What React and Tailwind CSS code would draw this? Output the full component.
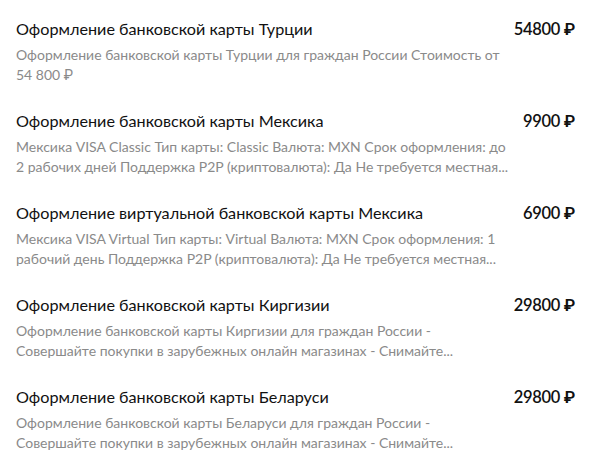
import React from 'react';

const items = [
  {
    title: 'Оформление банковской карты Турции',
    price: '54800 ₽',
    text: 'Оформление банковской карты Турции для граждан России Стоимость от 54 800 ₽',
  },
  {
    title: 'Оформление банковской карты Мексика',
    price: '9900 ₽',
    text: 'Мексика VISA Classic Тип карты: Classic Валюта: MXN Срок оформления: до 2 рабочих дней Поддержка P2P (криптовалюта): Да Не требуется местная...',
  },
  {
    title: 'Оформление виртуальной банковской карты Мексика',
    price: '6900 ₽',
    text: 'Мексика VISA Virtual Тип карты: Virtual Валюта: MXN Срок оформления: 1 рабочий день Поддержка P2P (криптовалюта): Да Не требуется местная...',
  },
  {
    title: 'Оформление банковской карты Киргизии',
    price: '29800 ₽',
    text: 'Оформление банковской карты Киргизии для граждан России - Совершайте покупки в зарубежных онлайн магазинах - Снимайте...',
  },
  {
    title: 'Оформление банковской карты Беларуси',
    price: '29800 ₽',
    text: 'Оформление банковской карты Беларуси для граждан России - Совершайте покупки в зарубежных онлайн магазинах - Снимайте...',
  },
];

export default function App() {
  return (
    <div
      className="w-[600px] h-[464px] overflow-hidden bg-white pl-4 pr-[25px] pt-[16px]"
      style={{ fontFamily: 'Lato, Roboto, "Noto Sans", sans-serif' }}
    >
      {items.map((item, i) => (
        <div key={i} className="flex justify-between h-[92px]">
          <div className="w-[495px]">
            <div className="text-[16.2px] leading-[26px] text-[#111]">{item.title}</div>
            <div className="mt-[3px] text-[14px] leading-[20px] text-[#8a8a8a] h-[37px] overflow-hidden">
              {item.text}
            </div>
          </div>
          <div className="text-[16.5px] leading-[26px] font-semibold tracking-[-0.3px] text-[#111] whitespace-nowrap">
            {item.price}
          </div>
        </div>
      ))}
    </div>
  );
}
